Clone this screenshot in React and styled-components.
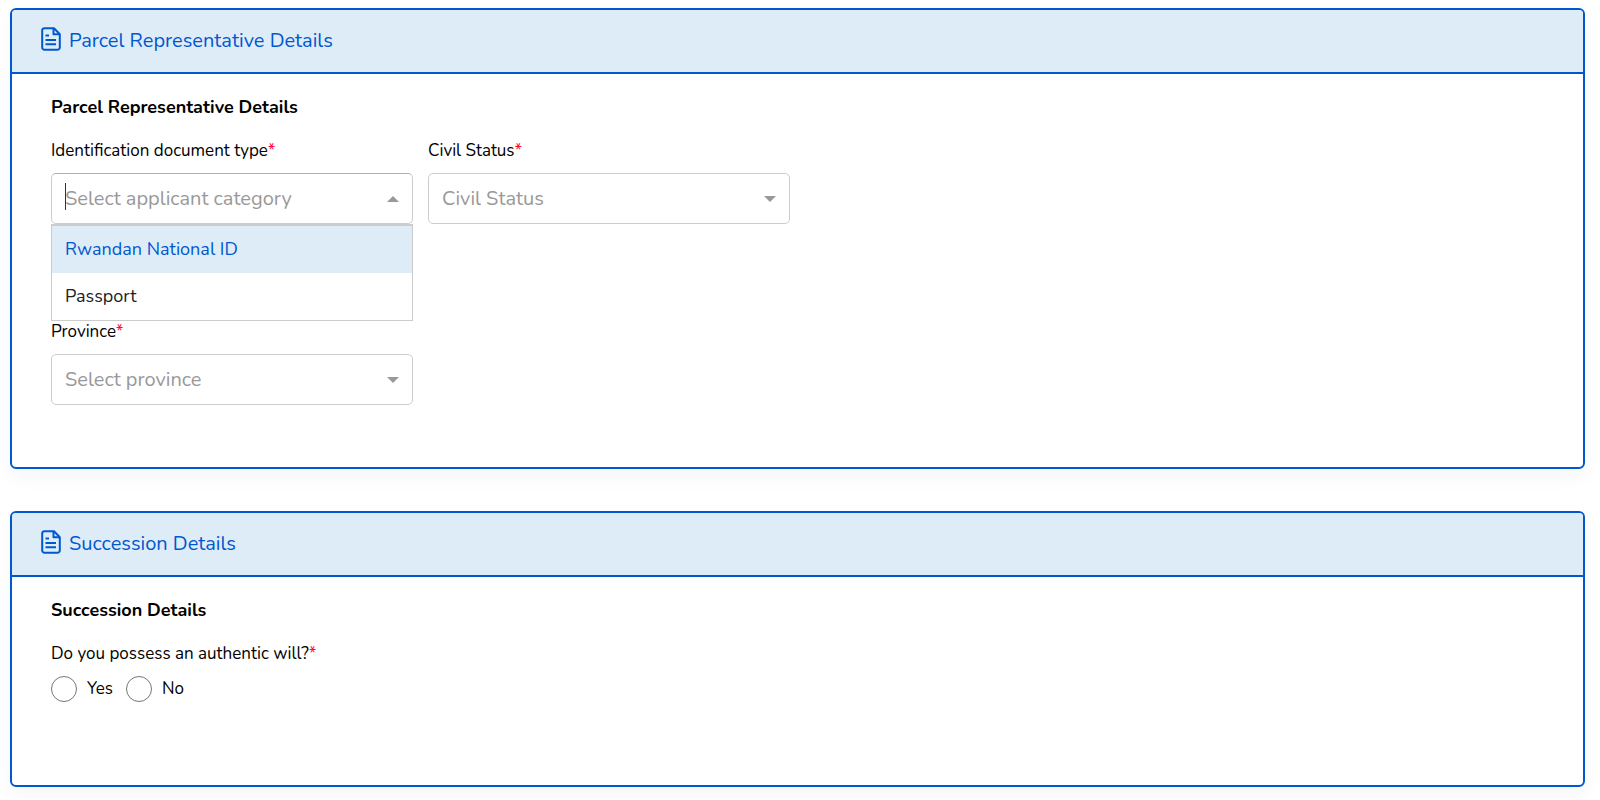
import React, { useState } from 'react';
import styled, { createGlobalStyle } from 'styled-components';

const IDENTIFICATION_TYPES = ['Rwandan National ID', 'Passport'];

const FileIcon = () => (
    <Icon viewBox="0 0 20 24" aria-hidden="true">
        <path d="M13 1.2H3.6A2.4 2.4 0 0 0 1.2 3.6V20.4A2.4 2.4 0 0 0 3.6 22.8H16.4A2.4 2.4 0 0 0 18.8 20.4V7.2Z" />
        <path d="M12.5 1.2V7.2H18.8M4.5 8.5H8M4.5 13H15M4.5 17.2H15" />
    </Icon>
);

const Panel = ({ title, children }) => (
    <Card>
        <CardHeader>
            <FileIcon />
            <HeaderTitle>{title}</HeaderTitle>
        </CardHeader>
        <CardBody>
            <SectionTitle>{title}</SectionTitle>
            {children}
        </CardBody>
    </Card>
);

const SelectField = ({ id, label, placeholder, options }) => (
    <Field>
        <Label htmlFor={id}>{label}<Required>*</Required></Label>
        <SelectBox>
            <Select id={id} defaultValue="">
                <option value="" disabled hidden>{placeholder}</option>
                {options.map(option => <option key={option}>{option}</option>)}
            </Select>
            <Arrow />
        </SelectBox>
    </Field>
);

const SearchField = ({ id, label, placeholder, options }) => {
    const [open, setOpen] = useState(true);
    const [value, setValue] = useState('');
    const [active, setActive] = useState(0);

    const choose = (option, index) => {
        setValue(option);
        setActive(index);
        setOpen(false);
    };

    return (
        <Field>
            <Label htmlFor={id}>{label}<Required>*</Required></Label>
            <SelectBox>
                <SearchInput
                    id={id}
                    type="text"
                    role="combobox"
                    aria-expanded={open}
                    aria-controls={`${id}-options`}
                    placeholder={placeholder}
                    value={value}
                    onChange={e => setValue(e.target.value)}
                    onClick={() => setOpen(!open)}
                />
                {open && !value && <Caret />}
                <Arrow $up={open} />
                {open &&
                    <Options id={`${id}-options`} role="listbox">
                        {options.map((option, index) => (
                            <Option
                                key={option}
                                role="option"
                                aria-selected={active === index}
                                $active={active === index}
                                onMouseEnter={() => setActive(index)}
                                onClick={() => choose(option, index)}
                            >
                                {option}
                            </Option>
                        ))}
                    </Options>
                }
            </SelectBox>
        </Field>
    );
};

export default function App() {
    return (
        <Page>
            <GlobalStyle />
            <Panel title="Parcel Representative Details">
                <Fields>
                    <SearchField
                        id="identification"
                        label="Identification document type"
                        placeholder="Select applicant category"
                        options={IDENTIFICATION_TYPES}
                    />
                    <SelectField
                        id="civil-status"
                        label="Civil Status"
                        placeholder="Civil Status"
                        options={['Single', 'Married', 'Divorced', 'Widowed']}
                    />
                </Fields>
                <Fields>
                    <SelectField
                        id="province"
                        label="Province"
                        placeholder="Select province"
                        options={['Kigali', 'Northern', 'Southern', 'Eastern', 'Western']}
                    />
                </Fields>
            </Panel>
            <Panel title="Succession Details">
                <RadioGroup>
                    <Legend>Do you possess an authentic will?<Required>*</Required></Legend>
                    <Radios>
                        <RadioLabel><Radio name="will" value="yes" />Yes</RadioLabel>
                        <RadioLabel><Radio name="will" value="no" />No</RadioLabel>
                    </Radios>
                </RadioGroup>
            </Panel>
        </Page>
    );
}

const GlobalStyle = createGlobalStyle`
  * {
    box-sizing: border-box;
  }
  body {
    margin: 0;
    background: #fff;
    color: #000;
    font-family: Nunito, "Open Sans", sans-serif;
    font-size: 18px;
  }
  input, select {
    font-family: inherit;
  }
`;

const Page = styled.main`
  display: flex;
  flex-direction: column;
  gap: 42px;
  padding: 8px 15px 12px 10px;
`;

const Card = styled.section`
  border: 2px solid #0058d0;
  border-radius: 6px;
  box-shadow: 0 8px 20px rgba(0, 0, 0, 0.04);
`;

const CardHeader = styled.header`
  display: flex;
  align-items: center;
  gap: 8px;
  height: 64px;
  padding: 0 29px;
  border-bottom: 2px solid #0058d0;
  border-radius: 4px 4px 0 0;
  background: #deecf8;
  color: #0058d0;
`;

const Icon = styled.svg`
  width: 20px;
  height: 24px;
  margin-bottom: 5px;
  fill: none;
  stroke: currentColor;
  stroke-width: 2;
  stroke-linejoin: round;
`;

const HeaderTitle = styled.h2`
  margin: 0;
  font-size: 20px;
  font-weight: 400;
  line-height: 28px;
`;

const CardBody = styled.div`
  padding: 19px 39px 62px;
`;

const SectionTitle = styled.h3`
  margin: 0 0 17px;
  font-size: 18px;
  font-weight: 700;
  line-height: 28px;
`;

const Fields = styled.div`
  display: grid;
  grid-template-columns: repeat(4, 1fr);
  column-gap: 15px;

  & + & {
    margin-top: 95px;
  }
`;

const Field = styled.div`
  display: flex;
  flex-direction: column;
  gap: 9px;
`;

const Label = styled.label`
  font-size: 17px;
  line-height: 26px;
`;

const Required = styled.span`
  color: #ff0a3c;
`;

const SelectBox = styled.div`
  position: relative;
`;

const Select = styled.select`
  display: block;
  width: 100%;
  height: 51px;
  padding: 0 40px 0 13px;
  border: 1px solid #ccc;
  border-radius: 5px;
  background: #fff;
  color: #999;
  font-size: 20px;
  appearance: none;
`;

const SearchInput = styled.input`
  display: block;
  width: 100%;
  height: 51px;
  padding: 0 40px 0 13px;
  border: 1px solid #ccc;
  border-top-color: #b3b3b3;
  border-radius: 5px;
  background: #fff;
  color: #000;
  font-size: 20px;
  outline: none;

  &::placeholder {
    color: #999;
    opacity: 1;
  }
`;

const Caret = styled.span`
  position: absolute;
  top: 10px;
  left: 14px;
  width: 1px;
  height: 27px;
  background: #333;
`;

const Arrow = styled.span`
  position: absolute;
  top: 23px;
  right: 14px;
  border: solid transparent;
  border-width: ${props => props.$up ? '0 6px 6px' : '6px 6px 0'};
  border-color: ${props => props.$up ? 'transparent transparent #999' : '#999 transparent transparent'};
  pointer-events: none;
`;

const Options = styled.ul`
  position: absolute;
  z-index: 1;
  top: 100%;
  left: 0;
  right: 0;
  margin: 0;
  padding: 0;
  border: solid #ccc;
  border-width: 2px 1px 1px;
  background: #fff;
  list-style: none;
`;

const Option = styled.li`
  padding: 11px 13px;
  background: ${props => props.$active ? '#deecf8' : '#fff'};
  color: ${props => props.$active ? '#0058d0' : '#212121'};
  font-size: 18px;
  line-height: 25px;
  cursor: pointer;
`;

const RadioGroup = styled.fieldset`
  margin: 0 0 21px;
  padding: 0;
  border: 0;
`;

const Legend = styled.legend`
  padding: 0;
  font-size: 17px;
  line-height: 26px;
`;

const Radios = styled.div`
  display: flex;
  gap: 13px;
  padding-top: 9px;
`;

const RadioLabel = styled.label`
  display: flex;
  align-items: center;
  gap: 10px;
  font-size: 17px;
  line-height: 26px;
`;

const Radio = styled.input.attrs({ type: 'radio' })`
  width: 26px;
  height: 26px;
  margin: 0;
  border: 1px solid #767676;
  border-radius: 50%;
  background: #fff;
  appearance: none;

  &:checked {
    border: 8px solid #0058d0;
  }
`;
